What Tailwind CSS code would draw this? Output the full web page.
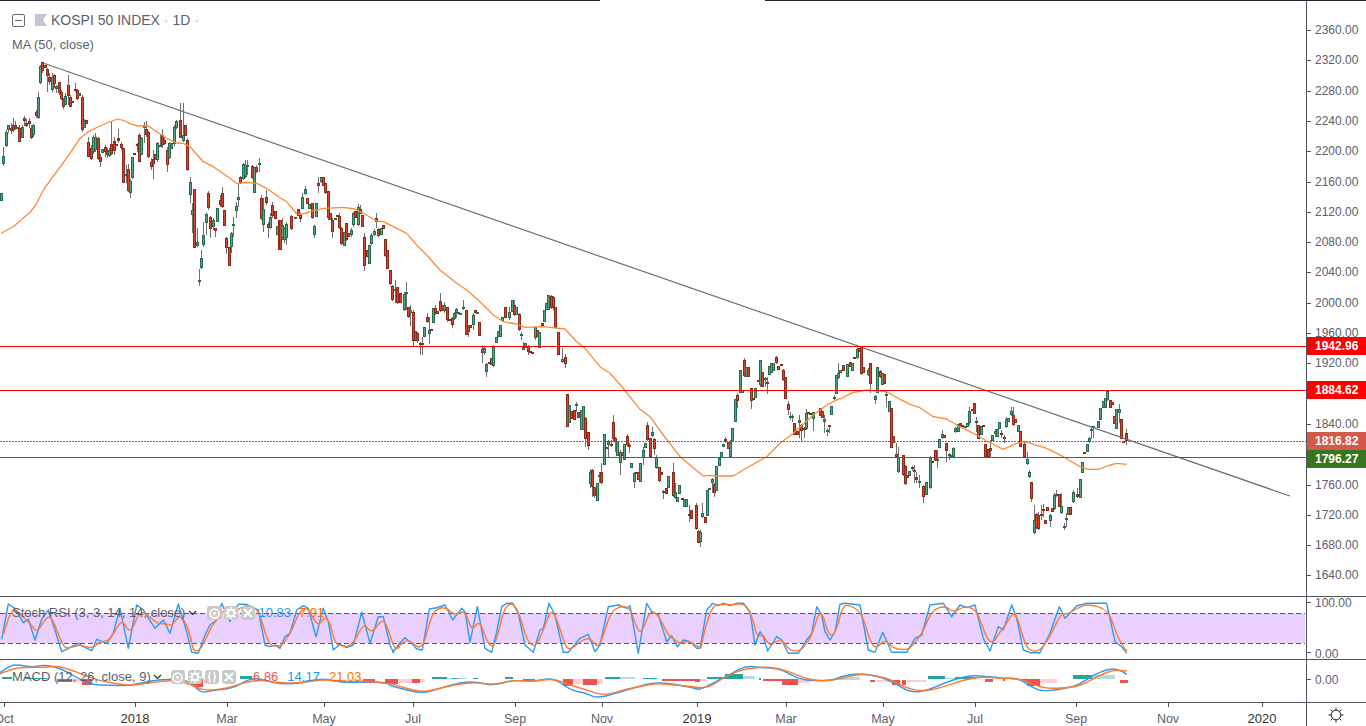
<!DOCTYPE html>
<html lang="en">
<head>
    <meta charset="UTF-8">
    <title>KOSPI 50 INDEX</title>
    <script src="https://cdn.jsdelivr.net/npm/@tailwindcss/browser@4"></script>
</head>
<body class="bg-white overflow-hidden">
<div class="w-[1366px] h-[726px] flex flex-col font-['Liberation_Sans',Arial,sans-serif] text-[#5d606b] overflow-hidden">

    <!-- top edge, has a gap in the middle -->
    <div class="h-px flex shrink-0">
        <div class="w-[600px] bg-[#1e2530]"></div>
        <div class="w-[165px]"></div>
        <div class="flex-1 bg-[#1e2530]"></div>
    </div>

    <!-- main pane -->
    <div class="h-[595px] flex shrink-0">
        <div class="w-[1306px] relative">
            <svg id="main" class="block" width="1306" height="595" viewBox="0 1 1306 595"></svg>
            <div class="absolute left-[12px] top-[11px] flex items-center h-[16px]">
                <svg width="13" height="13" viewBox="0 0 13 13" class="shrink-0"><rect x="0.5" y="0.5" width="12" height="12" rx="1.5" fill="none" stroke="#666"/><path d="M3 6.5h7" stroke="#666"/></svg>
                <svg width="12" height="12" viewBox="0 0 12 12" class="ml-[10px] shrink-0"><path d="M0 0h12l-4 6 4 6H0z" fill="#c5c5d2"/></svg>
                <span class="ml-[4px] text-[14px] leading-[16px] whitespace-nowrap">KOSPI 50 INDEX <span class="text-[#b0b3bb]">·</span> 1D <span class="text-[#b0b3bb]">·</span></span>
            </div>
            <div class="absolute left-[12px] top-[36px] text-[12.8px] leading-[16px] whitespace-nowrap">MA (50, close)</div>
        </div>
        <div id="price-axis" class="flex-1 relative border-l border-[#50535e] text-[12px] overflow-hidden"></div>
    </div>

    <div class="h-px bg-[#50535e] shrink-0"></div>

    <!-- stoch rsi pane -->
    <div class="h-[62px] flex shrink-0">
        <div class="w-[1306px] relative">
            <svg id="stoch" class="block" width="1306" height="62" viewBox="0 597 1306 62"></svg>
            <div class="absolute left-[12px] top-[9px] h-[14px] flex items-center text-[13px] whitespace-nowrap">
                <span>Stoch RSI (3, 3, 14, 14, close)</span>
                <svg width="9" height="6" viewBox="0 0 9 6" class="ml-[3px]"><path d="M1 1l3.5 3.5L8 1" fill="none" stroke="#333" stroke-width="1.2"/></svg>
                <div class="ml-[10px] w-[15px] h-[14px] rounded-[3px] bg-[#c9c9c9] flex items-center justify-center">
                    <svg width="11" height="11" viewBox="0 0 11 11"><circle cx="5.5" cy="5.5" r="4.5" fill="none" stroke="#fff" stroke-width="1.5"/><circle cx="5.5" cy="5.5" r="1.7" fill="#fff"/></svg>
                </div>
                <div class="ml-[2px] w-[14px] h-[14px] rounded-[3px] bg-[#c9c9c9] flex items-center justify-center">
                    <svg width="12" height="12" viewBox="0 0 12 12"><circle cx="6" cy="6" r="3.2" fill="none" stroke="#fff" stroke-width="2"/><path d="M6 0v2.5M6 9.5V12M0 6h2.5M9.5 6H12M1.8 1.8l1.8 1.8M8.4 8.4l1.8 1.8M10.2 1.8L8.4 3.6M3.6 8.4l-1.8 1.8" stroke="#fff" stroke-width="1.5"/></svg>
                </div>
                <div class="ml-[3px] w-[14px] h-[14px] rounded-[3px] bg-[#c9c9c9] flex items-center justify-center">
                    <svg width="10" height="10" viewBox="0 0 10 10"><path d="M1 1l8 8M9 1l-8 8" stroke="#fff" stroke-width="2"/></svg>
                </div>
                <span class="ml-[3px] text-[#2196f3]">10.83</span>
                <span class="ml-[8px] text-[#ff6d00]">7.91</span>
            </div>
        </div>
        <div class="flex-1 relative border-l border-[#50535e] text-[12px]">
            <div class="absolute left-0 top-[5px] w-[4px] h-px bg-[#50535e]"></div>
            <div class="absolute left-[8px] top-[0px] leading-[12px]">100.00</div>
            <div class="absolute left-0 top-[55px] w-[4px] h-px bg-[#50535e]"></div>
            <div class="absolute left-[8px] top-[51px] leading-[12px]">0.00</div>
        </div>
    </div>

    <div class="h-px bg-[#50535e] shrink-0"></div>

    <!-- macd pane -->
    <div class="h-[42px] flex shrink-0">
        <div class="w-[1306px] relative">
            <svg id="macd" class="block" width="1306" height="42" viewBox="0 660 1306 42"></svg>
            <div class="absolute left-[12px] top-[10px] h-[14px] flex items-center text-[13px] whitespace-nowrap">
                <span>MACD (12, 26, close, 9)</span>
                <svg width="9" height="6" viewBox="0 0 9 6" class="ml-[2px]"><path d="M1 1l3.5 3.5L8 1" fill="none" stroke="#333" stroke-width="1.2"/></svg>
                <div class="ml-[9px] w-[14px] h-[14px] rounded-[3px] bg-[#c9c9c9] flex items-center justify-center">
                    <svg width="11" height="11" viewBox="0 0 11 11"><circle cx="5.5" cy="5.5" r="4.5" fill="none" stroke="#fff" stroke-width="1.5"/><circle cx="5.5" cy="5.5" r="1.7" fill="#fff"/></svg>
                </div>
                <div class="ml-[3px] w-[14px] h-[14px] rounded-[3px] bg-[#c9c9c9] flex items-center justify-center">
                    <svg width="12" height="12" viewBox="0 0 12 12"><circle cx="6" cy="6" r="3.2" fill="none" stroke="#fff" stroke-width="2"/><path d="M6 0v2.5M6 9.5V12M0 6h2.5M9.5 6H12M1.8 1.8l1.8 1.8M8.4 8.4l1.8 1.8M10.2 1.8L8.4 3.6M3.6 8.4l-1.8 1.8" stroke="#fff" stroke-width="1.5"/></svg>
                </div>
                <div class="ml-[3px] w-[14px] h-[14px] rounded-[3px] bg-[#c9c9c9] flex items-center justify-center">
                    <svg width="10" height="12" viewBox="0 0 10 12"><path d="M3.5 1C2 1 2.5 3 2.5 4.5S2 6 1 6c1 0 1.500.5 1.500 1.500S2 11 3.500 11M6.500 1C8 1 7.500 3 7.500 4.500S8 6 9 6c-1 0-1.500.5-1.500 1.500S8 11 6.500 11" fill="none" stroke="#fff" stroke-width="1.500"/></svg>
                </div>
                <div class="ml-[3px] w-[14px] h-[14px] rounded-[3px] bg-[#c9c9c9] flex items-center justify-center">
                    <svg width="10" height="10" viewBox="0 0 10 10"><path d="M1 1l8 8M9 1l-8 8" stroke="#fff" stroke-width="2"/></svg>
                </div>
                <span class="ml-[13px] text-[#ef5350]">-6.86</span>
                <span class="ml-[9px] text-[#2196f3]">14.17</span>
                <span class="ml-[9px] text-[#ff6d00]">21.03</span>
            </div>
        </div>
        <div class="flex-1 relative border-l border-[#50535e] text-[12px]">
            <div class="absolute left-0 top-[19px] w-[4px] h-px bg-[#50535e]"></div>
            <div class="absolute left-[8px] top-[14px] leading-[12px]">0.00</div>
        </div>
    </div>

    <div class="h-px bg-[#50535e] shrink-0"></div>

    <!-- time axis -->
    <div class="flex-1 flex">
        <div id="time-axis" class="w-[1306px] relative overflow-hidden text-[12.5px]"></div>
        <div class="flex-1 border-l border-[#50535e] flex items-center justify-center pr-[1px]">
            <svg width="16" height="16" viewBox="0 0 16 16">
                <circle cx="8" cy="8" r="4.800" fill="none" stroke="#222"/>
                <path d="M8 0.500v2.500M8 13v2.500M0.500 8H3M13 8h2.500M2.700 2.700l1.800 1.800M11.500 11.500l1.800 1.800M13.300 2.700l-1.800 1.800M4.500 11.500l-1.800 1.800" stroke="#222"/>
            </svg>
        </div>
    </div>
</div>

<script>
// candles read off the chart: colour, x, body top, body bottom, wick top, wick bottom
// (3x coords, each group has its own origin)
const groups = [
    [0, 50, `g 3 430 455,g 10 318 342 292 348,g 19 247 290 240 292,g 25 226 242 226 250,r 32 235 245 220 252,r 40 226 242 205 245,r 46 226 235 212 240,g 52 232 238,r 58 233 274 225 276,g 67 230 262 225 265,r 73 205 215 197 228,r 79 218 226 208 232,r 88 214 223 205 235,r 94 235 265 225 268,g 100 226 257 222 262,r 109 187 200 180 205,g 115 142 205 125 208,g 121 48 100 45 102,r 127 37 63 35 70,r 136 46 56,r 142 58 80 55 125,r 148 81 97 70 105,g 157 80 120 70 125,r 163 76 103 72 115,g 169 108 118 105 130,r 178 97 130 95 135,r 184 127 148 120 150,r 190 148 172 145 178,g 196 137 163 130 165,r 205 106 140 75 165,r 211 140 170 135 172,r 217 153 160,r 226 118 124 100 126,r 232 120 146 118 150,g 238 130 140,r 247 140 240 135 245,g 253 212 232 208 235,r 259 211 223,r 265 275 320 260 322,r 274 295 328 285 330,g 280 260 305 255 312,g 286 260 300 250 305,r 295 265 328 262 330,r 301 320 334 312 350,g 307 298 310,r 316 290 305 285 320,r 322 303 316 295 325,g 328 300 318 295 320,r 334 283 312 215 315,r 343 272 302 260 315,r 349 282 288,r 355 265 275 238 278,r 364 283 296 275 300,r 370 293 398,g 379 373 380 345 398,r 385 358 425 342 427,g 391 392 428 388 443,g 397 322 385 320 387,r 403 310 314,r 412 283 290 280 305,r 418 254 335 250 337,g 424 264 314 260 316,g 433 226 236 215 280,r 439 238 257 212 260,r 445 247 323 243 325,r 454 337 352 325 360,r 460 327 341 300 388,r 466 313 332,g 472 280 330 275 335,g 481 286 290 255 290,r 487 256 285 238 295,r 493 271 284 265 286,r 502 301 347 290 365,g 508 280 326 275 328,g 514 280 298,g 523 232 284 225 288,g 529 214 234 210 236,r 541 211 264 160 265,g 550 254 273 160 275,r 556 226 258,r 562 271 361 265 363,g 571 397 436 380 458,g 577 480 496 460 550,r 583 418 595,g 592 576 587 535 590,g 598 691 697 657 708,g 604 625 655 600 658,g 610 556 587 515 590,g 619 492 518 490 555,r 625 430 475 423 480,r 631 500 535 497 565,g 640 510 530 505 540,r 646 535 544 533 560,g 652 475 517,r 661 450 466 435 470,r 667 430 472 410 475,r 673 481 529,r 679 565 596 560 612,r 688 592 649,g 694 549 592 545 608,g 700 523 529 500 560,g 709 469 485 455 505,g 715 442 451 400 470,r 721 382 400 378 402,g 730 343 388 340 390,g 736 345 380 330 385,g 742 345 350 330 375,r 757 349 385 345 388,g 763 350 427,r 769 352 367 345 370,g 778 340 343 325 365,r 784 445 507 435 510,g 790 476 523 445 546,r 799 442 460 420 465,r 805 522 535 515 565,g 811 502 535 490 537,r 817 466 499 455 505,r 826 484 508,g 832 529 555,r 838 511 601`],
    [280, 150, `r 0 210 300,g 7 225 265 205 270,g 13 235 272 230 280,g 19 222 264 215 285,r 34 198 238 195 240,g 46 202 208,r 55 178 198,r 61 196 209 190 215,g 67 141 176 130 178,g 76 118 134 108 136,r 82 145 163,g 88 163 178,r 97 160 205 158 208,g 103 228 254 225 265,g 109 160 203,r 115 100 109 80 128,g 124 82 98 80 100,r 130 82 108,r 136 100 130 98 132,r 145 124 204 122 210,r 151 190 210,r 157 210 245 205 265,g 166 205 210,r 172 194 200,r 178 198 235 190 238,r 184 233 280 230 285,g 193 245 287,r 199 220 270 218 272,r 205 250 263,g 214 240 256 235 260,g 220 190 227 185 230,r 226 183 205,g 235 172 226 163 228,r 241 176 190 165 192,r 247 195 232,r 253 260 346 250 362,r 262 300 322,g 268 284 340,g 274 256 282 250 285,g 283 243 254 238 258,r 289 205 217 190 235,r 295 237 259 235 262,g 304 234 256,r 310 226 238,r 316 268 319 266 320,r 322 300 358,r 331 361 403 360 405,r 337 409 451 405 453,g 346 418 424 390 460,r 352 412 459 410 462,r 361 430 460,g 373 433 482 425 484,g 379 427 430 395 480,r 385 472 502 470 505,g 391 481 490 465 528,r 400 487 574 480 590,r 406 544 574,r 412 550 574 545 580,r 421 580 583 575 615,g 427 580 583 560 615,g 433 532 562,r 442 502 518 490 520,g 448 541 553 500 582,r 454 538 544,g 460 475 520,r 466 475 490 465 495,r 472 484 493,r 481 454 484 430 486,r 487 466 484,g 493 466 484 455 490,r 502 471 511 470 515,r 508 508 514,r 517 505 526 500 535,g 523 490 508 485 510,g 529 478 490 475 505,g 535 487 493,g 541 490 496,g 550 472 475 450 480,r 559 481 556,r 565 530 544 525 560,r 571 526 535,g 580 496 526 490 540,r 586 481 490,g 592 487 490,r 598 517 559,r 607 598 610 585 640,g 613 595 610 590 615,g 619 643 667 640 682,r 628 637 643,r 634 625 645,g 640 590 646 585 650,g 649 562 581,g 655 544 562,g 661 526 562,g 667 502 514,r 676 472 505,g 688 487 505 470 510,g 697 451 487,r 703 466 496 450 498,g 709 472 496,r 718 493 541 488 543,g 724 553 556 545 570,g 730 590 598 575 600,g 736 580 595,r 745 587 605 585 615,r 751 602 608,r 757 606 612,g 766 532 565 530 570,r 772 541 562,g 778 547 595,r 787 520 529,g 793 481 517,g 799 458 480,g 805 434 480,r 814 438 475 435 478,r 820 442 475 438 480,r 826 472 535,r 835 547 616,g 847 628 637 595 640,r 856 622 643 612 655`],
    [560, 340, `r 22 163 263,g 28 195 250,r 34 213 236,r 43 211 242,g 49 193 197 187 215,r 55 216 233,g 64 210 270,g 70 198 270,r 76 235 299 230 320,r 85 277 320 275 330,g 91 396 431 388 445,r 97 391 442 388 472,r 103 442 470 440 475,g 112 430 484,g 118 406 412 396 430,r 124 397 430 370 432,g 133 283 376,r 139 322 325,g 145 306 314 300 350,r 154 313 315 300 322,r 160 247 299 225 305,r 166 295 306 290 335,g 172 304 350,g 181 336 370 330 405,r 187 337 348,g 193 313 362,r 202 289 317 283 320,r 208 316 319 310 338,g 214 370 385,g 223 400 428 395 445,r 229 397 400,r 235 397 421,g 241 370 427,g 250 331 355 322 375,g 256 310 326,r 262 256 302 247 304,r 271 295 352,g 277 277 288 262 290,r 283 298 329 295 345,g 289 352 385 345 388,r 298 382 424 380 426,r 304 397 406,g 310 454 460 450 478,r 319 445 463,g 325 409 445,r 340 397 469 370 472,g 346 457 475 430 478,g 352 472 487,g 358 436 463,r 367 475 481,g 373 478 502,g 379 478 502,g 388 523 529 495 545,r 394 511 538,r 409 496 568 490 570,r 415 572 607 570 610,g 421 577 607 570 620,g 427 520 532 490 535,r 436 532 550,g 442 451 529,g 448 445 449,g 457 418 430 415 460,r 463 433 460 430 470,g 469 379 454,g 478 354 379,g 484 337 355,g 490 313 322,r 496 298 304 290 310,r 505 307 328,g 511 306 352 300 354,g 517 265 307,g 526 178 247,r 532 166 183 160 205,g 541 91 160,g 547 151 160,r 553 61 109 55 110,g 559 82 112,r 565 82 112,r 574 145 184 143 208,r 580 175 178,g 586 145 175,r 595 121 124,g 601 61 136 60 140,r 607 97 142,g 616 115 118 110 140,r 622 127 133 110 162,g 628 79 106,g 634 70 100,g 640 70 95,r 649 52 70 48 72,r 655 79 91,r 664 73 79,r 670 91 120 88 122,r 676 112 178,r 685 193 211 182 225,g 691 227 229 215 240,g 697 227 229 222 245,r 703 250 286,r 712 274 286,g 718 241 250 225 295,r 724 256 274 252 305,r 733 263 265 262 295,g 739 220 268 208 270,r 745 217 223,r 751 219 222,g 760 217 238 215 272,r 781 205 229,r 787 214 235,g 793 238 247 225 280,g 802 271 277 265 288,r 808 256 259 255 280,g 814 199 226,g 823 172 178 165 180,g 829 106 163,g 835 100 115 70 118`],
    [840, 340, `g 1 91 100,r 10 76 94,g 22 73 112,r 31 67 82,g 37 70 94,r 43 51 53,g 52 28 55 20 57,r 58 25 37,r 64 22 103 18 106,r 70 82 100,g 85 90 105 85 108,r 91 70 133 68 160,g 106 169 181 165 192,g 112 82 160,r 121 94 112 90 115,g 127 100 136,r 133 103 133,g 139 163 169 150 200,g 148 184 217,r 154 205 325,r 160 289 310,r 169 343 352 310 355,g 175 351 396 320 398,r 190 346 406 345 408,r 196 379 433 376 436,r 202 406 415,g 208 394 409,r 217 382 388 378 392,g 223 389 391 375 430,r 229 412 421 395 428,g 238 424 426 405 445,r 250 439 472 435 490,g 259 427 466,g 271 352 445 348 447,r 277 364 370,r 286 331 364,g 292 358 364 330 385,g 298 298 325,g 307 283 295 270 298,r 313 286 295,r 319 310 334 308 365,g 328 343 346 340 360,g 334 345 352,g 340 325 352 320 355,g 346 265 277 262 280,g 355 253 277,r 361 250 259,r 367 255 258,g 376 259 265,g 382 250 262,g 388 214 250 200 255,r 397 208 214,r 403 190 223,r 409 243 245 230 275,r 415 256 298,g 424 259 286,r 430 256 262,r 436 313 352,r 445 328 352,r 451 325 334 300 350,g 457 286 304,g 466 274 283 268 290,g 472 268 292,g 478 247 268,r 484 280 287 270 295,r 493 292 295 285 310,g 499 238 262 230 265,g 505 235 247,g 514 214 226 202 228,r 520 226 256 200 258,r 526 238 250,g 535 256 277,r 541 274 323,r 553 313 352 305 355,g 562 358 373 335 375,g 568 397 412 390 415,r 574 427 478 425 485,g 583 541 580 495 582,r 589 523 565 518 568,r 595 524 566 515 570,r 604 522 524 495 540,r 610 508 512 492 530,r 616 541 553,r 622 502 514,g 631 526 544 522 562,r 637 505 517,g 643 466 508 460 510,g 649 463 468 450 470,r 658 463 503,g 664 499 520 460 522,g 673 559 565 550 570,g 679 535 538 520 560,g 685 502 526,r 691 502 526,g 700 457 487 450 490,r 712 463 472 445 475,g 721 418 475,g 727 367 400,r 733 337 343,g 742 313 337,g 748 295 307 290 310,g 754 268 271 258 297,g 760 259 263 258 295,g 775 244 265,g 781 205 241,g 790 184 205,g 796 175 205,g 802 154 181 150 183,r 811 181 205,r 817 187 196,r 823 229 253,g 829 208 268,g 838 208 220 193 250,r 844 238 298,r 850 304 310,r 859 280 303 268 315`],
];

// helper: "x,y x,y" in 3x coords -> page coords
function pts(ox, oy, list) {
    return list.trim().split(/\s+/).map(p => {
        const [x, y] = p.split(',').map(Number);
        return [ox + x / 3, oy + y / 3];
    });
}
const line = (arr, color, w) => `<polyline points="${arr.map(p => p[0].toFixed(1) + ',' + p[1].toFixed(1)).join(' ')}" fill="none" stroke="${color}" stroke-width="${w}" stroke-linejoin="round"/>`;

// rounded version for the slower lines, curves through the midpoints
function smooth(arr, color, w) {
    let d = `M${arr[0][0].toFixed(1)} ${arr[0][1].toFixed(1)}`;
    for (let i = 1; i < arr.length - 1; i++) {
        const mx = (arr[i][0] + arr[i + 1][0]) / 2, my = (arr[i][1] + arr[i + 1][1]) / 2;
        d += `Q${arr[i][0].toFixed(1)} ${arr[i][1].toFixed(1)} ${mx.toFixed(1)} ${my.toFixed(1)}`;
    }
    const last = arr[arr.length - 1];
    d += `L${last[0].toFixed(1)} ${last[1].toFixed(1)}`;
    return `<path d="${d}" fill="none" stroke="${color}" stroke-width="${w}"/>`;
}

// candles
let wicks = '', bodies = '';
groups.forEach(([ox, oy, s]) => {
    s.split(',').forEach(item => {
        const [c, x, t, b, wt, wb] = item.trim().split(' ');
        const px = Math.round(ox + Number(x) / 3) - 1;
        const top = Math.round(oy + Number(t) / 3);
        const h = Math.max(2, Math.round((Number(b) - Number(t)) / 3));
        if (wt) {
            const w1 = Math.round(oy + Number(wt) / 3), w2 = Math.round(oy + Number(wb) / 3);
            wicks += `<rect x="${px + 1}" y="${w1}" width="1" height="${w2 - w1}" fill="#6f6f6f"/>`;
        }
        const dark = c === 'r' ? '#8a2a1d' : '#276b4e';
        const fill = c === 'r' ? '#d8452f' : '#55a583';
        bodies += `<rect x="${px}" y="${top}" width="3" height="${h}" fill="${dark}"/>`;
        if (h > 2) bodies += `<rect x="${px + 1}" y="${top + 1}" width="1" height="${h - 2}" fill="${fill}"/>`;
    });
});

const ma = [
    ...pts(0, 50, '3,550 40,530 90,487 110,460 130,420 170,365 210,310 240,265 265,245 300,228 335,213 355,207 375,213 395,223 415,228 445,228 470,245 500,265 530,279 550,280 570,290 610,335 640,350 680,378 710,400 740,397 770,400 800,415 838,442'),
    ...pts(280, 150, '0,143 20,155 50,192 65,193 100,182 130,175 190,172 225,177 250,190 290,213 310,215 340,230 380,250 410,285 440,315 480,360 530,400 560,420 600,455 640,495 670,515 710,522 735,532 790,530 855,537 890,575'),
    ...pts(560, 340, '75,25 120,80 150,100 190,145 240,208 270,230 310,285 360,350 430,408 450,406 470,408 520,408 570,378 620,350 660,310 700,280 760,225 800,195 838,176'),
    ...pts(840, 340, '0,177 40,157 80,150 140,155 180,178 210,193 240,203 280,230 320,237 360,260 400,280 440,303 490,328 530,310 555,305 620,325 670,350 720,380 745,388 775,388 810,375 830,370 860,373'),
];

document.getElementById('main').innerHTML = `
    <g shape-rendering="crispEdges">${wicks}${bodies}</g>
    ${line(ma, '#ff8a35', 1.3)}
    <line x1="43" y1="63" x2="1290" y2="496" stroke="#6e6e6e" stroke-width="1.2"/>
    <g shape-rendering="crispEdges">
        <line x1="0" x2="1306" y1="346.5" y2="346.5" stroke="#ff0000"/>
        <line x1="0" x2="1306" y1="390.5" y2="390.5" stroke="#ff0000"/>
        <line x1="0" x2="1306" y1="441.5" y2="441.5" stroke="#b84a3e" stroke-dasharray="2 1"/>
        <line x1="0" x2="1306" y1="457.5" y2="457.5" stroke="#38761d"/>
    </g>`;

// stoch rsi
const blue = [
    ...pts(0, 590, '5,148 25,42 45,55 70,98 85,88 105,150 125,88 145,60 165,120 185,185 205,175 235,160 250,170 275,182 290,148 320,160 340,130 360,55 385,175 410,45 430,60 465,115 490,90 510,130 535,42 560,125'),
    ...pts(190, 595, '0,150 5,172 25,175 45,120 60,90 80,75 95,25 120,80 145,28 170,28 190,40 205,45 225,150 240,155 255,150 270,160 285,125 300,115 320,45 340,32 355,40 378,125 400,40 415,80 430,165 450,148 470,158 490,150 515,52 540,145 565,65 580,65 600,150 610,172 628,145'),
    ...pts(390, 595, '8,172 25,150 45,128 65,145 80,162 97,165 118,42 140,38 165,30 188,75 215,40 225,50 240,142 262,35 285,160 305,172 320,110 335,35 350,25 368,25 385,55 405,150 430,172 450,105 460,100 477,25 495,60 520,172 535,172 570,130 595,118 615,170 630,150 655,35 685,30 710,40 720,32 745,175 770,25 785,50 805,60 830,140 845,122 862,155 880,135 900,140 920,160 928,160'),
    ...pts(700, 595, '0,160 20,45 38,25 55,32 70,25 90,32 110,25 130,25 150,50 165,150 180,110 190,125 203,168 230,125 245,135 265,175 295,175 320,135 335,115 350,35 365,60 375,110 390,135 405,110 420,28 435,25 480,30 505,165 525,172 548,112 575,172 620,172 645,130 665,120 690,30 730,25 755,65 780,30 800,38 825,30 850,130 870,168 895,95'),
    ...pts(1000, 590, '10,120 35,45 50,85 70,180 90,188 120,188 150,130 178,50 195,85 230,48 260,40 320,40 345,155 365,170 380,190'),
];
// signal line lags the fast one
const orange = blue.map((p, i) => {
    const a = blue[Math.max(i - 1, 0)], b = blue[Math.min(i + 1, blue.length - 1)];
    return [p[0] + 2, (a[1] + p[1] * 4 + b[1]) / 6];
});
orange.length = orange.length - 1;
orange.push([1127, 651]);

document.getElementById('stoch').innerHTML = `
    <rect x="0" y="613" width="1305" height="30" fill="#e9d0ff"/>
    <g shape-rendering="crispEdges" stroke="#5b5068" stroke-dasharray="5 3">
        <line x1="0" x2="1305" y1="613.5" y2="613.5"/>
        <line x1="0" x2="1305" y1="643.5" y2="643.5"/>
    </g>
    ${line(blue, '#2f9bf0', 1.4)}
    ${smooth(orange, '#ff7a2f', 1.4)}`;

// macd
const C = { g: '#26a69a', l: '#b2dfdb', r: '#ef5350', p: '#ffcdd2' };
const hist = [
    [0, 590, 'g 5 35 262 268,g 75 140 263 268,r 170 215 268 277,p 215 245 268 275,r 245 275 268 285,p 385 400 268 274,r 580 610 268 292,p 610 640 268 278,g 720 755 258 268,r 1090 1125 268 278,r 1155 1200 268 280'],
    [390, 595, 'r 0 25 252 268,p 25 65 252 265,r 65 90 252 265,p 90 105 252 262,g 125 170 246 252,l 170 185 248 252,g 185 205 248 252,l 205 230 250 252,g 250 265 250 252,g 345 370 247 252,r 400 435 252 258,r 520 550 252 272,p 550 580 252 268,r 580 620 252 270,p 620 640 252 266,g 645 690 245 252,l 690 735 245 252,g 760 800 248 252,r 815 915 252 258,r 915 930 252 262'],
    [700, 595, 'p 0 20 252 258,g 20 75 245 252,g 75 130 238 252,l 130 165 243 252,g 178 184 250 254,r 190 245 253 258,r 245 295 253 270,p 295 330 253 265,l 415 480 247 254,r 510 525 254 262,p 530 570 254 260,r 575 600 254 270,r 605 618 254 270,p 620 680 254 260,g 685 735 243 253,l 735 765 248 253,g 765 825 246 253,r 855 880 253 262,r 910 915 253 258,g 935 940 250 256'],
    [1000, 590, 'r 60 80 268 273,r 80 120 268 288,p 120 170 268 278,g 180 190 266 268,g 200 220 266 268,g 220 275 255 268,l 275 345 255 268,r 360 385 270 278'],
];
let histHtml = '';
hist.forEach(([ox, oy, s]) => s.split(',').forEach(it => {
    const [c, x1, x2, y1, y2] = it.split(' ');
    histHtml += `<rect x="${ox + x1 / 3}" y="${oy + y1 / 3}" width="${(x2 - x1) / 3}" height="${(y2 - y1) / 3}" fill="${C[c]}"/>`;
}));
const macdBlue = [
    ...pts(0, 590, '0,248 30,225 60,225 100,232 130,224 170,232 200,245 240,268 280,285 330,285 390,288 450,272 500,268 550,268 580,285 605,310 640,300 700,295 740,270 770,265 800,272 840,283 900,280 960,265 1000,272 1040,278 1090,275 1130,275 1165,280'),
    ...pts(390, 595, '0,272 50,285 100,295 150,280 210,262 260,260 310,272 370,255 430,260 490,247 540,285 590,295 620,310 680,295 760,270 800,262 860,268 925,283'),
    ...pts(700, 595, '0,283 40,265 90,237 140,212 180,218 240,220 290,250 340,258 400,255 430,242 480,235 540,245 580,262 630,292 680,288 730,265 780,248 820,241 860,245 895,247'),
    ...pts(1000, 590, '0,265 50,265 80,280 110,300 140,303 200,295 240,283 280,255 330,235 360,240 380,253'),
];
const macdOrange = [
    ...pts(0, 590, '0,252 30,238 70,232 130,232 170,228 210,238 250,255 300,272 350,282 400,286 450,278 520,270 570,282 610,302 680,296 730,278 780,270 830,278 900,280 970,268 1040,275 1100,272 1165,282'),
    ...pts(390, 595, '0,265 50,280 100,291 150,280 200,268 260,262 310,270 370,255 430,260 490,250 540,270 590,285 640,302 700,285 760,272 800,265 860,270 925,278'),
    ...pts(700, 595, '0,278 30,276 60,255 110,228 180,215 240,220 290,240 340,257 400,257 450,243 490,237 560,248 610,275 650,287 690,287 740,272 790,255 850,245 895,250'),
    ...pts(1000, 590, '0,265 50,265 90,278 130,295 170,295 220,292 260,278 300,255 340,240 380,243'),
];
document.getElementById('macd').innerHTML = `
    <g shape-rendering="crispEdges">${histHtml}</g>
    ${smooth(macdBlue, '#2f9bf0', 1.4)}
    ${smooth(macdOrange, '#ff7a2f', 1.4)}`;

// price axis
const axis = document.getElementById('price-axis');
let axisHtml = '';
[2360, 2320, 2280, 2240, 2200, 2160, 2120, 2080, 2040, 2000, 1960, 1920, 1840, 1760, 1720, 1680, 1640].forEach(p => {
    const y = Math.round(29 + (2360 - p) / 40 * 30.3);
    axisHtml += `<div class="absolute left-0 w-[4px] h-px bg-[#50535e]" style="top:${y}px"></div>
        <div class="absolute left-[8px] leading-[12px]" style="top:${y - 6}px">${p}.00</div>`;
});
[['1942.96', 336, 'bg-[#ff0000]'], ['1884.62', 380, 'bg-[#ff0000]'], ['1816.82', 431, 'bg-[#d35a4a]'], ['1796.27', 449, 'bg-[#38761d]']].forEach(([t, y, bg]) => {
    axisHtml += `<div class="absolute left-0 right-0 h-[18px] ${bg} text-white font-bold pl-[8px] leading-[18px]" style="top:${y}px">${t}</div>`;
});
axis.innerHTML = axisHtml;

// time axis
const timeAxis = document.getElementById('time-axis');
timeAxis.innerHTML = [['Oct', 4], ['2018', 135, 1], ['Mar', 227], ['May', 324], ['Jul', 413], ['Sep', 515], ['Nov', 602], ['2019', 697, 1], ['Mar', 786], ['May', 883], ['Jul', 975], ['Sep', 1076], ['Nov', 1168], ['2020', 1262, 1]]
    .map(([t, x, year]) => `<div class="absolute top-0 w-px h-[4px] bg-[#50535e]" style="left:${x}px"></div>
        <div class="absolute top-[9px] leading-[14px] -translate-x-1/2 ${year ? 'text-[#333] text-[13px]' : ''}" style="left:${x}px">${t}</div>`).join('');
</script>
</body>
</html>
